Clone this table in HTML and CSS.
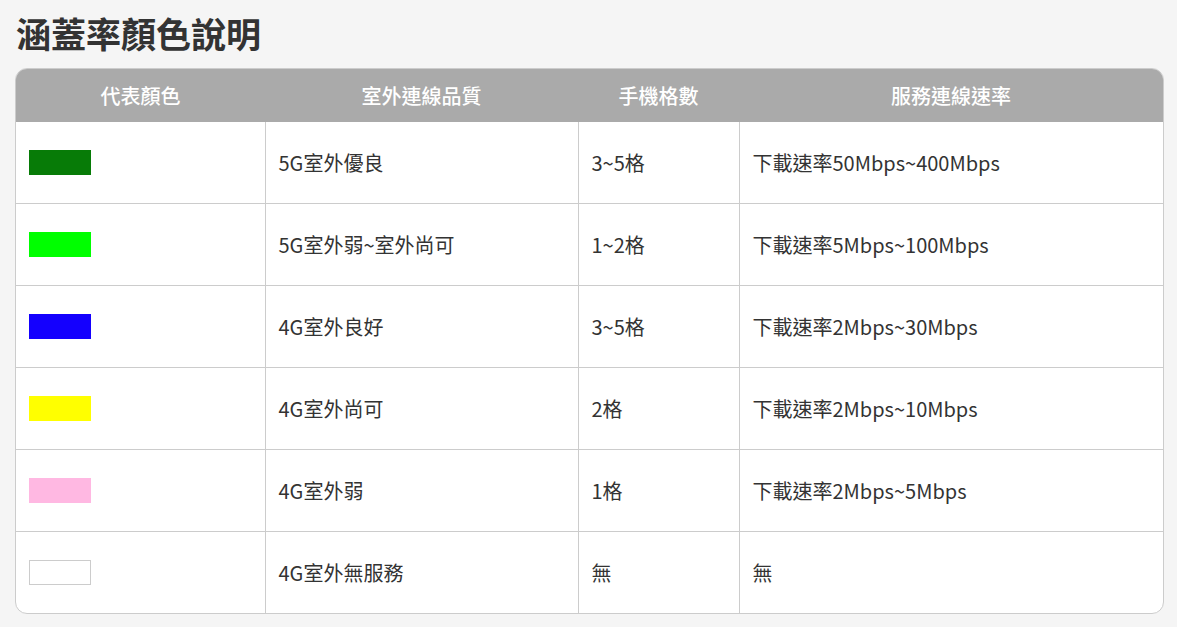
FILE: index.html
```html
<!DOCTYPE html>
<html lang="zh-Hant">
<head>
<meta charset="utf-8">
<title>涵蓋率顏色說明</title>
<link rel="stylesheet" href="styles.css">
</head>
<body>
<main class="page">
  <h1 class="title">涵蓋率顏色說明</h1>
  <div class="table-wrap">
    <table class="legend">
      <colgroup>
        <col class="c1"><col class="c2"><col class="c3"><col class="c4">
      </colgroup>
      <thead>
        <tr><th>代表顏色</th><th>室外連線品質</th><th>手機格數</th><th>服務連線速率</th></tr>
      </thead>
      <tbody>
        <tr><td><span class="swatch sw-green"></span></td><td>5G室外優良</td><td>3~5格</td><td>下載速率50Mbps~400Mbps</td></tr>
        <tr><td><span class="swatch sw-lime"></span></td><td>5G室外弱~室外尚可</td><td>1~2格</td><td>下載速率5Mbps~100Mbps</td></tr>
        <tr><td><span class="swatch sw-blue"></span></td><td>4G室外良好</td><td>3~5格</td><td>下載速率2Mbps~30Mbps</td></tr>
        <tr><td><span class="swatch sw-yellow"></span></td><td>4G室外尚可</td><td>2格</td><td>下載速率2Mbps~10Mbps</td></tr>
        <tr><td><span class="swatch sw-pink"></span></td><td>4G室外弱</td><td>1格</td><td>下載速率2Mbps~5Mbps</td></tr>
        <tr><td><span class="swatch sw-white"></span></td><td>4G室外無服務</td><td>無</td><td>無</td></tr>
      </tbody>
    </table>
  </div>
</main>
</body>
</html>
```
FILE: styles.css
```css
html, body {
  margin: 0;
  padding: 0;
  background: #f5f5f5;
}
body {
  font-family: "Noto Sans CJK TC", "Noto Sans", sans-serif;
  color: #333;
}
.page {
  padding: 8px 13px 0 15px;
}
.title {
  margin: 0 0 10px 1px;
  font-size: 35px;
  font-weight: 700;
  line-height: 50px;
  color: #333;
}
.table-wrap {
  border: 1px solid #cccccc;
  border-radius: 12px;
  overflow: hidden;
  background: #fff;
}
.legend {
  width: 100%;
  border-collapse: collapse;
  table-layout: fixed;
}
.c1 { width: 249px; }
.c2 { width: 313px; }
.c3 { width: 161px; }
.legend th {
  background: #aaaaaa;
  color: #fff;
  font-weight: 500;
  font-size: 20px;
  height: 53px;
  padding: 0;
  text-align: center;
}
.legend td {
  height: 81px;
  padding: 0 13px;
  font-size: 20px;
  color: #333;
  border-top: 1px solid #cccccc;
  border-left: 1px solid #cccccc;
  vertical-align: middle;
}
.legend td:first-child { border-left: none; }
.legend tbody tr:first-child td { border-top: none; }
.swatch {
  display: block;
  width: 62px;
  height: 25px;
  box-sizing: border-box;
}
.sw-green { background: #077b07; }
.sw-lime { background: #00ff00; }
.sw-blue { background: #1400fe; }
.sw-yellow { background: #ffff00; }
.sw-pink { background: #ffb8e2; }
.sw-white { background: #fff; border: 1px solid #cccccc; }
```
